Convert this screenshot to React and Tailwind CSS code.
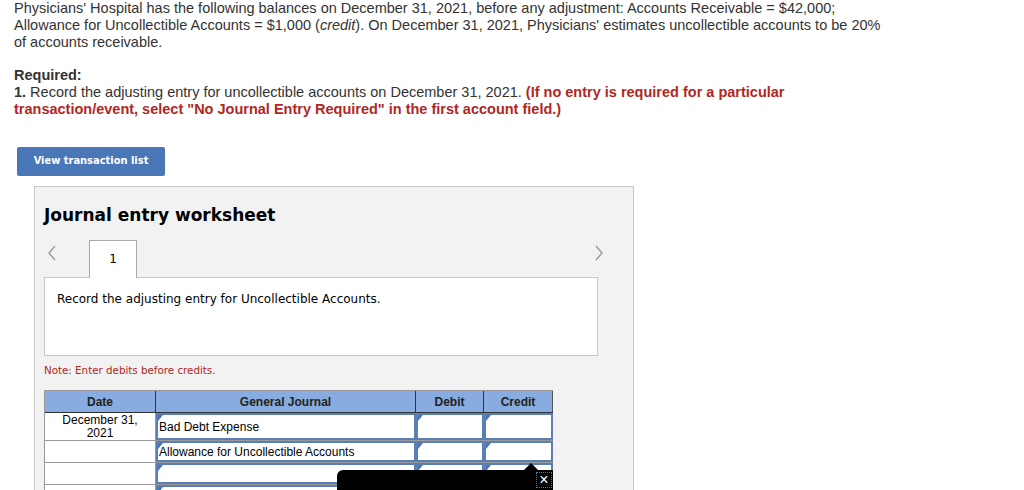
import React from "react";

function Corner() {
  return (
    <span className="absolute left-0 top-0 w-0 h-0 border-t-[6px] border-r-[5px] border-t-[#4a74b4] border-r-transparent" />
  );
}

function InputCell({ w, text }) {
  return (
    <div className={`relative ${w} h-full bg-white border-2 border-[#5a7fb5] flex items-center px-[1px] text-[12px] text-black`}>
      <Corner />
      {text}
    </div>
  );
}

const rows = [
  { date: ["December 31,", "2021"], account: "Bad Debt Expense", h: "h-[28px]" },
  { date: null, account: "Allowance for Uncollectible Accounts", h: "h-[22px]" },
  { date: null, account: "", h: "h-[22px]" },
  { date: null, account: "", h: "h-[22px]" },
];

export default function App() {
  return (
    <div className="w-[1024px] h-[490px] overflow-hidden bg-white relative">
      {/* Question text */}
      <div className="pl-[14px] pt-[0px] text-[14.5px] leading-[17px] text-[#333]" style={{ fontFamily: "'Liberation Sans', Arial, sans-serif" }}>
        <p>
          Physicians' Hospital has the following balances on December 31, 2021, before any adjustment: Accounts Receivable = $42,000;
          <br />
          Allowance for Uncollectible Accounts = $1,000 (<i>credit</i>). On December 31, 2021, Physicians' estimates uncollectible accounts to be 20%
          <br />
          of accounts receivable.
        </p>
        <p className="mt-[16px] font-bold">Required:</p>
        <p>
          <b>1.</b> Record the adjusting entry for uncollectible accounts on December 31, 2021.{" "}
          <b className="text-[#b1271f]">(If no entry is required for a particular</b>
          <br />
          <b className="text-[#b1271f]">transaction/event, select "No Journal Entry Required" in the first account field.)</b>
        </p>
      </div>

      <div className="pl-[17px] mt-[28px]">
        <button
          className="w-[148px] h-[29px] bg-[#4a77b8] rounded-[2px] text-white text-[11px] font-bold"
          style={{ fontFamily: "'DejaVu Sans Condensed', 'DejaVu Sans', sans-serif" }}
        >
          View transaction list
        </button>
      </div>

      {/* Worksheet panel */}
      <div
        className="ml-[34px] mt-[10px] w-[600px] h-[320px] bg-[#f2f2f2] border border-[#c8c8c8] px-[9px] pt-[16px]"
        style={{ fontFamily: "'DejaVu Sans', Verdana, sans-serif" }}
      >
        <h2 className="text-[17px] font-bold text-black leading-[24px]">Journal entry worksheet</h2>

        <div className="relative flex items-end h-[38px] mt-[12px]">
          <svg className="absolute left-[3px] top-[6px]" width="10" height="16" viewBox="0 0 10 16">
            <path d="M8 1 L2 8 L8 15" fill="none" stroke="#9a9a9a" strokeWidth="1.4" />
          </svg>
          <div className="ml-[45px] w-[48px] h-[38px] bg-white border border-b-0 border-[#aaa] flex items-center justify-center text-[12px] text-black relative z-10 -mb-[1px]">
            1
          </div>
          <svg className="absolute right-[20px] top-[6px]" width="10" height="16" viewBox="0 0 10 16">
            <path d="M2 1 L8 8 L2 15" fill="none" stroke="#9a9a9a" strokeWidth="1.4" />
          </svg>
        </div>

        <div className="w-[554px] h-[79px] bg-white border border-[#c8c8c8] pl-[12px] pt-[12px] text-[12px] text-black">
          Record the adjusting entry for Uncollectible Accounts.
        </div>

        <p className="mt-[7px] text-[10.3px] text-[#b1271f]">Note: Enter debits before credits.</p>

        {/* Journal table */}
        <div className="mt-[12px] w-[509px] border-l border-t border-[#999]" style={{ fontFamily: "Arial, 'Liberation Sans', sans-serif" }}>
          <div className="flex h-[22px] bg-[#88acdf] border-b border-[#333] text-[12px] font-bold text-[#222]">
            <div className="w-[111px] flex items-center justify-center border-r border-[#333]">Date</div>
            <div className="w-[260px] flex items-center justify-center border-r border-[#333]">General Journal</div>
            <div className="w-[68px] flex items-center justify-center border-r border-[#333]">Debit</div>
            <div className="w-[69px] flex items-center justify-center border-r border-[#555]">Credit</div>
          </div>
          {rows.map((r, i) => (
            <div key={i} className={`flex ${r.h} border-b border-[#999]`}>
              <div className="w-[111px] bg-white flex flex-col items-center justify-center pt-[1px] text-[12px] leading-[13px] text-black border-r border-[#999]">
                {r.date && r.date.map((d) => <span key={d}>{d}</span>)}
              </div>
              <InputCell w="w-[260px]" text={r.account} />
              <InputCell w="w-[68px]" text="" />
              <InputCell w="w-[69px]" text="" />
            </div>
          ))}
        </div>
      </div>

      {/* Tooltip overlay */}
      <div className="absolute left-[337px] top-[470px] w-[216px] h-[30px] bg-black rounded-tl-[6px]">
        <span className="absolute right-[14px] -top-[7px] w-0 h-0 border-l-[8px] border-r-[8px] border-b-[8px] border-l-transparent border-r-transparent border-b-black" />
        <span className="absolute right-[1px] top-[2px] w-[16px] h-[16px] border border-dotted border-[#4a77b8] flex items-center justify-center text-white text-[16px] leading-none" style={{ fontFamily: "Arial, sans-serif" }}>
          ×
        </span>
      </div>
    </div>
  );
}
